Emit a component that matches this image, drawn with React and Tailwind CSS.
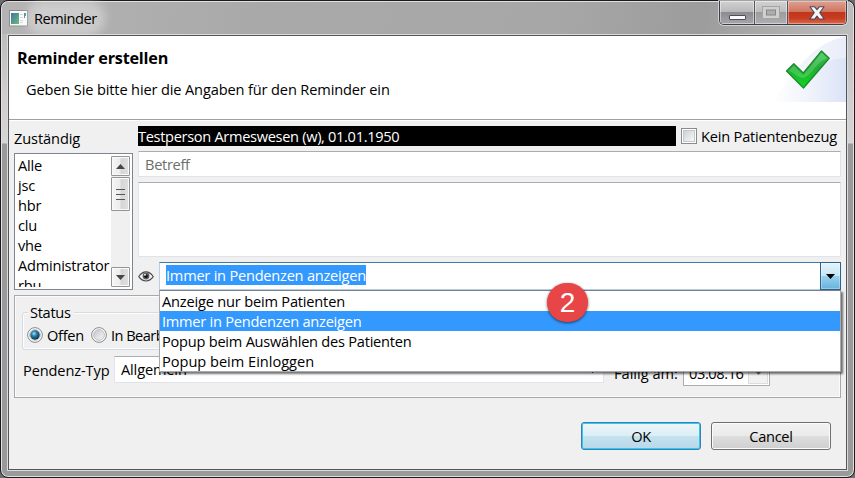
import React from "react";

const users = ["Alle", "jsc", "hbr", "clu", "vhe", "Administrator", "rbu"];

const options = [
  { label: "Anzeige nur beim Patienten", track: "tracking-[-0.19px]" },
  { label: "Immer in Pendenzen anzeigen", track: "tracking-[-0.25px]", selected: true },
  { label: "Popup beim Auswählen des Patienten", track: "tracking-[-0.24px]" },
  { label: "Popup beim Einloggen", track: "tracking-[-0.02px]" },
];

function AppIcon() {
  return (
    <svg width="19" height="17" viewBox="0 0 19 17" className="block shrink-0">
      <rect x="0.5" y="0.5" width="18" height="15.5" fill="#fafafa" stroke="#8b8f92" />
      <defs>
        <linearGradient id="appicon" x1="0" y1="0" x2="1" y2="1">
          <stop offset="0" stopColor="#3f74a0" />
          <stop offset="1" stopColor="#6dbb7d" />
        </linearGradient>
      </defs>
      <rect x="2" y="3" width="8" height="11" fill="url(#appicon)" />
      <path d="M11 4.500h3M11 7.500h3M11 10.500h3M11 12.500h3" stroke="#d5d8da" />
      <path d="M15 3h2v3h-1v2h-1z" fill="#4a86a0" />
    </svg>
  );
}

function WindowButtons() {
  return (
    <div className="flex h-[24px] w-[128px] shrink-0 overflow-hidden rounded-b-[5px] border border-t-0 border-[#3d3f48] shadow-[0_0_0_1px_rgba(235,235,235,0.65)]">
      <div className="flex w-[35px] items-end justify-center border-r border-[#55555b] bg-[linear-gradient(#d2d2d2_0,#b9b9b9_46%,#8d8d8f_50%,#a5a5ab_100%)] pb-[4px] shadow-[inset_0_0_0_1px_rgba(255,255,255,0.45)]">
        <div className="h-[5px] w-[17px] rounded-[1px] border border-[#4c4e5c] bg-[#fafafa]" />
      </div>
      <div className="flex w-[33px] items-center justify-center border-r border-[#55555b] bg-[linear-gradient(#d2d2d2_0,#bdbdbd_46%,#9c9c9e_50%,#aeaeb4_100%)] shadow-[inset_0_0_0_1px_rgba(255,255,255,0.45)]">
        <svg width="18" height="13" viewBox="0 0 18 13">
          <rect x="0.5" y="0.5" width="17" height="12" fill="#cfcfcf" stroke="#a5a5a5" />
          <rect x="4.500" y="4" width="9" height="5" fill="#adadad" stroke="#868686" />
        </svg>
      </div>
      <div className="flex flex-1 items-center justify-center bg-[linear-gradient(#e0a090_0,#cf7663_46%,#c1351b_50%,#c83c22_75%,#db6a4e_100%)] shadow-[inset_0_0_0_1px_rgba(255,255,255,0.35)]">
        <svg width="16" height="14" viewBox="0 0 16 14">
          <path
            d="M1 0.800h4.700L8 3.700l2.300-2.900H15L10.700 6.800 15.200 13H10.300L8 10 5.700 13H0.800L5.300 6.800z"
            fill="#f6f6f6"
            stroke="#474a5c"
            strokeWidth="1.100"
            strokeLinejoin="round"
          />
        </svg>
      </div>
    </div>
  );
}

function HeaderArt() {
  return (
    <svg width="74" height="66" viewBox="0 0 74 66" className="block">
      <defs>
        <linearGradient id="swoosh" x1="0" x2="1">
          <stop offset="0" stopColor="#ffffff" />
          <stop offset="0.500" stopColor="#f0f3fb" />
          <stop offset="1" stopColor="#dbe3f7" />
        </linearGradient>
        <linearGradient id="tick" x1="0" y1="0" x2="0" y2="1">
          <stop offset="0" stopColor="#3fc452" />
          <stop offset="0.450" stopColor="#1fae33" />
          <stop offset="1" stopColor="#0fd51d" />
        </linearGradient>
      </defs>
      <path d="M1 66C20 36 40 8 74 0V66z" fill="url(#swoosh)" />
      <path d="M36 26C48 10 60 3 74 0V22C60 23 48 27 36 34z" fill="#ffffff" opacity="0.350" />
      <path
        d="M14.500 35L21.800 27.700 31.300 37 49.500 15 57.200 22.300 31.500 52z"
        fill="url(#tick)"
        stroke="#1d8a30"
        strokeWidth="1.300"
        strokeLinejoin="round"
      />
      <path d="M16.500 35L21.800 29.700 31.300 39 49.600 17 55 22.200C44 26 40 40 31 42 26 42 22 36 16.500 35z" fill="#ffffff" opacity="0.180" />
    </svg>
  );
}

function ScrollButton({ down }) {
  return (
    <div className="flex h-[20px] w-[19px] items-center justify-center rounded-[1px] border border-[#959595] bg-[linear-gradient(90deg,#f6f6f6_0,#ececec_45%,#d6d6d8_55%,#e0e0e0_100%)] shadow-[inset_0_0_0_1px_#fafafa]">
      <svg width="9" height="5" viewBox="0 0 9 5">
        <path d={down ? "M0 0H9L4.500 5z" : "M0 5H9L4.500 0z"} fill="#454545" />
      </svg>
    </div>
  );
}

function UserList() {
  return (
    <div className="flex h-[137px] w-[119px] border border-[#7d8590] bg-white p-[2px]">
      <div className="h-[131px] flex-1 overflow-hidden pl-[1px]">
        {users.map((u) => (
          <div key={u} className="h-[20px] tracking-[-0.23px] whitespace-nowrap first:-mt-px">
            {u}
          </div>
        ))}
      </div>
      <div className="flex w-[19px] flex-col bg-[#f0f0f0]">
        <ScrollButton />
        <div className="mt-[1px] flex h-[34px] flex-col items-center justify-center gap-[4px] rounded-[1px] border border-[#959595] bg-[linear-gradient(90deg,#f6f6f6_0,#ececec_45%,#d6d6d8_55%,#e0e0e0_100%)] shadow-[inset_0_0_0_1px_#fafafa]">
          <div className="h-px w-[9px] bg-[#555]" />
          <div className="h-px w-[9px] bg-[#555]" />
          <div className="h-px w-[9px] bg-[#555]" />
        </div>
        <div className="flex-1" />
        <ScrollButton down />
      </div>
    </div>
  );
}

function Eye() {
  return (
    <svg width="16" height="11" viewBox="0 0 16 11" className="block shrink-0">
      <path d="M0.700 5.700C3 2.200 5.300 0.900 8 0.900S13 2.200 15.300 5.700C13 8.800 10.800 10 8 10S3 8.800 0.700 5.700z" fill="#f3f3f3" stroke="#4a4a4a" strokeWidth="1.100" />
      <circle cx="8" cy="5" r="3.400" fill="#5a5a60" />
      <circle cx="8" cy="5.200" r="1.700" fill="#111" />
      <circle cx="7" cy="3.800" r="1" fill="#e8e8e8" />
    </svg>
  );
}

function Radio({ on }) {
  return (
    <svg width="16" height="16" viewBox="0 0 16 16" className="block shrink-0">
      <defs>
        <radialGradient id="dot" cx="0.400" cy="0.350" r="0.650">
          <stop offset="0" stopColor="#a8e4f8" />
          <stop offset="0.400" stopColor="#2d83ad" />
          <stop offset="1" stopColor="#0b2e4d" />
        </radialGradient>
        <linearGradient id="well" x1="0" y1="0" x2="1" y2="1">
          <stop offset="0" stopColor="#c3c7cb" />
          <stop offset="1" stopColor="#f7f7f7" />
        </linearGradient>
      </defs>
      <circle cx="8" cy="8" r="7.400" fill="#f8f8f8" stroke="#8a8c8e" />
      <circle cx="8" cy="8" r="5.400" fill="url(#well)" stroke="#b4b8bc" strokeWidth="0.800" />
      {on && <circle cx="8" cy="8" r="4.700" fill="url(#dot)" />}
    </svg>
  );
}

export default function App() {
  return (
    <div className="h-[478px] w-[855px] overflow-hidden bg-[#6a6e6e] font-['Open_Sans','Noto_Sans',sans-serif] text-[14.600px] leading-[20px] text-black">
      <div className="relative flex h-[478px] w-[855px] flex-col rounded-[8px] border border-[#1c1a1e] bg-[linear-gradient(#b5b4b4_0,#cfcdcd_20%,#d6d4d4_142px,#9a9a9a_143px,#9a9a9a_100%)] shadow-[inset_0_0_0_1px_#e2e0e0]">
        <header className="mx-px mt-px flex h-[32px] items-start rounded-t-[7px] bg-[linear-gradient(100deg,#b4b4b4_0,#a9a9a9_30%,#a7a7a7_65%,#9c9c9c_82%,#bdbdbd_100%)] pl-[7px]">
          <div className="mt-[8px]">
            <AppIcon />
          </div>
          <div className="mt-[6px] ml-[6px] rounded-full bg-white/35 tracking-[-0.45px] shadow-[0_0_10px_8px_rgba(255,255,255,0.35)]">
            Reminder
          </div>
          <div className="mr-[6px] ml-auto -mt-px">
            <WindowButtons />
          </div>
        </header>

        <main className="mx-[7px] mt-[1px] flex h-[435px] flex-col border border-[#55565a] bg-[#f0f0f0] shadow-[0_0_0_1px_#dcdada]">
          <section className="flex h-[84px] shrink-0 justify-between border-b border-[#a0a0a0] bg-white">
            <div className="pl-[8px]">
              <h1 className="mt-[12px] text-[16.200px] leading-[20px] font-bold tracking-[-0.2px]">Reminder erstellen</h1>
              <p className="mt-[11px] pl-[9px] tracking-[-0.14px]">Geben Sie bitte hier die Angaben für den Reminder ein</p>
            </div>
            <HeaderArt />
          </section>
          <div className="h-px shrink-0 bg-white" />

          <section className="flex h-[169px] shrink-0 gap-[5px] pr-[5px] pl-[5px]">
            <div className="w-[119px]">
              <div className="mt-[7px] mb-[5px] tracking-[-0.1px]">Zuständig</div>
              <UserList />
            </div>
            <div className="flex flex-1 flex-col pt-[5px]">
              <div className="flex">
                <div className="h-[20px] w-[538px] bg-black tracking-[-0.32px] text-white">Testperson Armeswesen (w), 01.01.1950</div>
                <div className="mt-[2px] ml-[5px] h-[16px] w-[16px] border border-[#8a8b8d] bg-white p-[1px]">
                  <div className="h-full w-full border border-[#c4c8cc] bg-[linear-gradient(135deg,#cdd1d5,#f8f8f8)]" />
                </div>
                <div className="ml-[4px] tracking-[-0.2px] whitespace-nowrap">Kein Patientenbezug</div>
              </div>
              <div className="mt-[5px] h-[26px] rounded-[1px] border border-[#e2e3ea] border-t-[#abadb3] bg-white pt-[2px] pl-[6px] tracking-[-0.3px] text-[#6d6d6d]">
                Betreff
              </div>
              <div className="mt-[5px] h-[75px] rounded-[1px] border border-[#e2e3ea] border-t-[#abadb3] bg-white" />
              <div className="mt-[5px] flex items-center">
                <Eye />
                <div className="ml-[5px] flex h-[28px] flex-1 border border-[#b5cfe7] border-t-[#3d7bad] bg-white">
                  <div className="mt-[2px] ml-[6px] h-[20px] bg-[#3399ff] tracking-[-0.23px] text-white">Immer in Pendenzen anzeigen</div>
                  <div className="-mt-px -mr-px ml-auto flex h-[28px] w-[21px] items-center justify-center border border-[#2c628b] bg-[linear-gradient(#e5f4fc_0,#c4e5f6_50%,#98d1ef_51%,#68b3db_100%)] shadow-[inset_0_0_0_1px_rgba(255,255,255,0.3)]">
                    <svg width="9" height="5" viewBox="0 0 9 5">
                      <path d="M0 0H9L4.500 5z" fill="#000" />
                    </svg>
                  </div>
                </div>
              </div>
            </div>
          </section>

          <section className="mx-[5px] mt-[5px] h-[103px] shrink-0 border border-[#a9a9ad] pl-[7px] shadow-[inset_0_0_0_1px_#fbfbfb]">
            <div className="mt-[16px] h-[38px] rounded-[3px] border border-[#d3dbe3] shadow-[inset_0_0_0_1px_#fcfcfc]">
              <div className="-mt-[11px] ml-[5px] w-[46px] bg-[#f0f0f0] pl-[2px] tracking-[-0.3px]">Status</div>
              <div className="mt-[3px] flex items-center pl-[4px]">
                <Radio on />
                <span className="ml-[4px] w-[44px] tracking-[-0.3px]">Offen</span>
                <Radio />
                <span className="ml-[4px] tracking-[-0.55px] whitespace-nowrap">In Bearbeitung</span>
              </div>
            </div>
            <div className="mt-[5px] flex items-start">
              <span className="mt-[5px] ml-[1px] w-[91px] tracking-[-0.12px]">Pendenz-Typ</span>
              <div className="mt-[1px] flex h-[27px] w-[490px] justify-between border border-[#e2e3ea] border-t-[#abadb3] bg-white pt-[2px] pr-[6px] pl-[6px] tracking-[-0.15px]">
                Allgemein
                <svg width="9" height="5" viewBox="0 0 9 5" className="mt-[9px]">
                  <path d="M0 0H9L4.500 5z" fill="#000" />
                </svg>
              </div>
              <span className="mt-[8px] ml-[10px] w-[69px] tracking-[0px]">Fällig am:</span>
              <div className="mt-[4px] flex h-[27px] w-[87px] justify-between border border-[#abadb3] bg-white p-[1px] pl-[5px] tracking-[-0.4px]">
                <span className="mt-[2px]">03.08.16</span>
                <div className="flex w-[20px] items-center justify-center border border-[#dcdcdc] bg-[#f2f2f2]">
                  <svg width="7" height="4" viewBox="0 0 7 4">
                    <path d="M0 0H7L3.500 4z" fill="#777" />
                  </svg>
                </div>
              </div>
            </div>
          </section>

          <footer className="mt-[24px] flex justify-end gap-[10px] pr-[15px]">
            <button className="h-[28px] w-[120px] rounded-[3px] border border-[#3c7fb1] bg-[linear-gradient(#eef6fa_0,#dceef6_48%,#c4e1ee_52%,#b7d9e9_100%)] shadow-[inset_0_0_0_1px_#2fc8f2] tracking-[-0.3px]">
              OK
            </button>
            <button className="h-[28px] w-[120px] rounded-[3px] border border-[#707070] bg-[linear-gradient(#f2f2f2_0,#ebebeb_48%,#dddddd_52%,#cfcfcf_100%)] shadow-[inset_0_0_0_1px_#fbfbfb] tracking-[-0.3px]">
              Cancel
            </button>
          </footer>
        </main>

        <ul className="absolute top-[289px] left-[158px] h-[82px] w-[682px] border border-[#a8aab0] border-t-[#78808c] bg-white shadow-[2px_2px_2px_rgba(0,0,0,0.55)]">
          {options.map((o) => (
            <li key={o.label} className={"h-[20px] pl-[2px] " + o.track + (o.selected ? " bg-[#3399ff] text-white" : "")}>
              {o.label}
            </li>
          ))}
        </ul>

        <div className="absolute top-[282px] left-[546px] flex h-[39px] w-[41px] items-center justify-center rounded-full bg-[#e84547] font-['Liberation_Sans',Arial,sans-serif] text-[28px] text-white shadow-[0_1px_3px_rgba(0,0,0,0.6)]">
          2
        </div>
      </div>
    </div>
  );
}
